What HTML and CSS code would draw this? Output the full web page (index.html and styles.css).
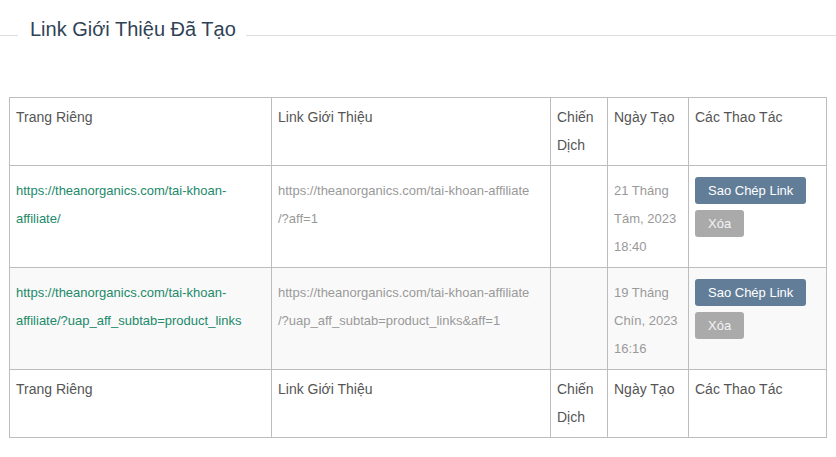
FILE: index.html
```html
<!DOCTYPE html>
<html lang="vi">
<head>
<meta charset="utf-8">
<title>Link Giới Thiệu Đã Tạo</title>
<link rel="stylesheet" href="styles.css">
</head>
<body>
<div class="section-title">
  <span class="rule rule-left"></span>
  <h2 class="title">Link Giới Thiệu Đã Tạo</h2>
  <span class="rule rule-right"></span>
</div>

<table class="links">
  <colgroup>
    <col class="c1"><col class="c2"><col class="c3"><col class="c4"><col class="c5">
  </colgroup>
  <thead>
    <tr>
      <th>Trang Riêng</th>
      <th>Link Giới Thiệu</th>
      <th>Chiến Dịch</th>
      <th>Ngày Tạo</th>
      <th>Các Thao Tác</th>
    </tr>
  </thead>
  <tbody>
    <tr>
      <td><a class="page-link" href="#">https://theanorganics.com/tai-khoan-affiliate/</a></td>
      <td class="muted">https://theanorganics.com/tai-khoan-affiliate<br>/?aff=1</td>
      <td></td>
      <td class="muted">21 Tháng Tám, 2023 18:40</td>
      <td class="actions">
        <button class="btn btn-copy">Sao Chép Link</button>
        <button class="btn btn-delete">Xóa</button>
      </td>
    </tr>
    <tr class="alt">
      <td><a class="page-link" href="#">https://theanorganics.com/tai-khoan-affiliate/?uap_aff_subtab=product_links</a></td>
      <td class="muted">https://theanorganics.com/tai-khoan-affiliate<br>/?uap_aff_subtab=product_links&amp;aff=1</td>
      <td></td>
      <td class="muted">19 Tháng Chín, 2023 16:16</td>
      <td class="actions">
        <button class="btn btn-copy">Sao Chép Link</button>
        <button class="btn btn-delete">Xóa</button>
      </td>
    </tr>
  </tbody>
  <tfoot>
    <tr>
      <th>Trang Riêng</th>
      <th>Link Giới Thiệu</th>
      <th>Chiến Dịch</th>
      <th>Ngày Tạo</th>
      <th>Các Thao Tác</th>
    </tr>
  </tfoot>
</table>
</body>
</html>
```

FILE: styles.css
```css
html, body {
  margin: 0;
  padding: 0;
  background: #fff;
  font-family: "Liberation Sans", Arial, sans-serif;
}

.section-title {
  display: flex;
  align-items: flex-end;
  margin-top: 18px;
}

.rule {
  height: 1px;
  background: #dedede;
  margin-bottom: 5px;
}

.rule-left {
  flex: 0 0 18px;
}

.rule-right {
  flex: 1 1 auto;
}

.title {
  margin: 0;
  padding: 0 10px 0 12px;
  font-size: 20px;
  font-weight: normal;
  line-height: 23px;
  color: #2f4356;
}

.links {
  margin: 56px 0 0 9px;
  width: 817px;
  border-collapse: collapse;
  table-layout: fixed;
  border: 1px solid #bdbdbd;
}

.c1 { width: 262px; }
.c2 { width: 279px; }
.c3 { width: 57px; }
.c4 { width: 81px; }
.c5 { width: 138px; }

.links th,
.links td {
  border: 1px solid #bdbdbd;
  vertical-align: top;
  text-align: left;
}

.links th {
  font-weight: normal;
  font-size: 14px;
  line-height: 28px;
  color: #555;
  padding: 5px 6px 6px;
  height: 56px;
  background: #fff;
}

.links td {
  font-size: 13px;
  line-height: 28px;
  padding: 11px 6px 6px;
  color: #555;
}

.links tr.alt td {
  background: #f9f9f9;
}

.page-link {
  color: #22896a;
  text-decoration: none;
}

.links td.muted {
  color: #999;
}

.links td.actions {
  padding-top: 11px;
  line-height: 0;
}

.btn {
  display: block;
  border: none;
  border-radius: 3px;
  height: 27px;
  line-height: 27px;
  padding: 0 13px;
  font-family: "Liberation Sans", Arial, sans-serif;
  font-size: 13px;
  color: #fff;
  cursor: pointer;
  margin: 0 0 6px 0;
}

.btn-copy {
  background: #627d98;
}

.btn-delete {
  background: #aaaaaa;
  color: #f4f4f4;
}
```
